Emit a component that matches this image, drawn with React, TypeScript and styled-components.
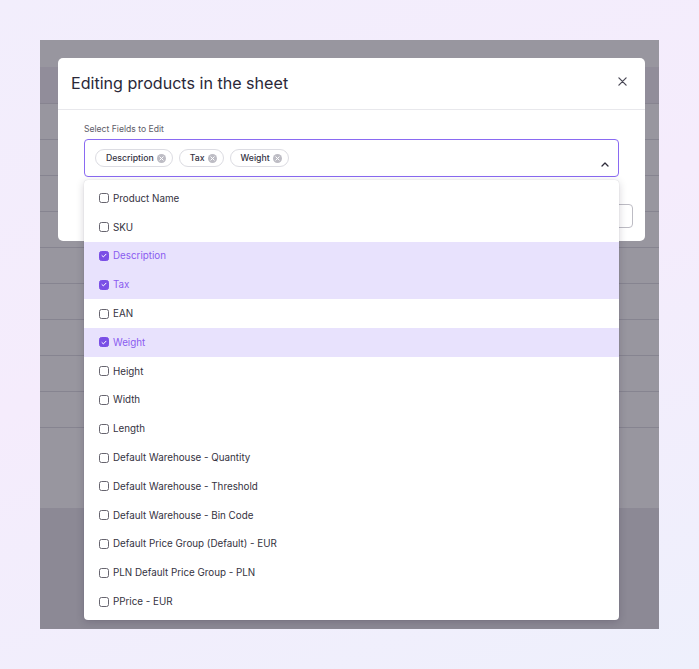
import React from "react";
import styled, { createGlobalStyle } from "styled-components";

const GlobalStyle = createGlobalStyle`
  html, body {
    margin: 0;
    padding: 0;
  }
  body {
    font-family: Inter, "Noto Sans", "Liberation Sans", sans-serif;
    background: linear-gradient(160deg, #f2eefc 0%, #f5ecfc 45%, #eef0fc 100%);
    min-height: 669px;
  }
  * {
    box-sizing: border-box;
  }
`;

const Page = styled.div`
  width: 699px;
  height: 669px;
  padding: 40px;
`;

const Frame = styled.div`
  position: relative;
  width: 619px;
  height: 589px;
  overflow: hidden;
  background: #eae9ee;
  display: flex;
  flex-direction: column;
`;

const AppTopBar = styled.div`
  height: 27px;
  background: #ffffff;
`;

const AppToolbar = styled.div`
  height: 37px;
  background: #f3f0f6;
  border-bottom: 1px solid #e2e1e6;
`;

const Table = styled.div`
  display: flex;
  flex-direction: column;
  background: #ffffff;
  padding-bottom: 80px;
`;

const TableRow = styled.div`
  height: 36px;
  border-bottom: 1px solid #e1e0e5;
`;

const Overlay = styled.div`
  position: absolute;
  inset: 0;
  background: rgba(6, 0, 22, 0.41);
`;

const Modal = styled.div`
  position: absolute;
  top: 18px;
  left: 18px;
  width: 587px;
  background: #ffffff;
  border-radius: 5px;
  display: flex;
  flex-direction: column;
`;

const ModalHeader = styled.div`
  height: 52px;
  padding: 0 18px 2px 13px;
  display: flex;
  align-items: center;
  justify-content: space-between;
  border-bottom: 1px solid #e8e8ec;
`;

const Title = styled.h2`
  margin: 0;
  font-size: 16.1px;
  font-weight: 400;
  color: #2a2838;
`;

const CloseButton = styled.button`
  border: none;
  background: none;
  padding: 0;
  width: 10px;
  height: 10px;
  display: flex;
  align-items: center;
  justify-content: center;
  margin-top: -2px;
  cursor: pointer;
`;

const ModalBody = styled.div`
  padding: 14px 26px 0 26px;
  display: flex;
  flex-direction: column;
  gap: 4px;
`;

const FieldLabel = styled.label`
  font-size: 8.6px;
  line-height: 11px;
  color: #5e5c68;
`;

const SelectWrap = styled.div`
  position: relative;
`;

const SelectBox = styled.div`
  height: 38px;
  border: 1.5px solid #8a6af2;
  border-radius: 4px;
  padding: 0 10px 0 10px;
  display: flex;
  align-items: center;
  gap: 6px;
  position: relative;
`;

const Chip = styled.span`
  height: 18px;
  padding: 0 6px 0 10px;
  border: 1px solid #dcdce2;
  border-radius: 9px;
  display: inline-flex;
  align-items: center;
  gap: 3px;
  font-size: 8.7px;
  font-weight: 500;
  color: #33313f;
`;

const ChipClear = styled.span`
  width: 9px;
  height: 9px;
  border-radius: 50%;
  background: #bdbcc4;
  display: inline-flex;
  align-items: center;
  justify-content: center;
`;

const Chevron = styled.span`
  position: absolute;
  right: 9px;
  bottom: 9px;
  display: flex;
`;

const Dropdown = styled.ul`
  position: absolute;
  top: 41px;
  left: 0;
  right: 0;
  margin: 0;
  padding: 4px 0;
  list-style: none;
  background: #ffffff;
  border-radius: 4px;
  box-shadow: 0 2px 8px rgba(20, 10, 40, 0.18), 0 0 1px rgba(20, 10, 40, 0.2);
  z-index: 2;
`;

const Option = styled.li<{ $selected: boolean }>`
  height: 28.8px;
  padding-left: 15px;
  display: flex;
  align-items: center;
  gap: 4px;
  font-size: 9.8px;
  color: ${({ $selected }) => ($selected ? "#8a5cf0" : "#34323e")};
  background: ${({ $selected }) => ($selected ? "#e8e2fd" : "#ffffff")};
`;

const Checkbox = styled.span<{ $checked: boolean }>`
  width: 10px;
  height: 10px;
  border-radius: 2.5px;
  border: ${({ $checked }) =>
    $checked ? "1.3px solid #7a4fe6" : "1.3px solid #67656f"};
  background: ${({ $checked }) => ($checked ? "#7a4fe6" : "#ffffff")};
  display: inline-flex;
  align-items: center;
  justify-content: center;
  flex-shrink: 0;
`;

const ModalFooter = styled.div`
  padding: 27px 12px 13px;
  display: flex;
  justify-content: flex-end;
  gap: 8px;
`;

const FooterButton = styled.button`
  height: 24px;
  padding: 0 14px;
  border: 1px solid #bdbcc4;
  border-radius: 4px;
  background: #ffffff;
  font-family: inherit;
  font-size: 10px;
  color: #34323e;
`;

const fields = [
  "Product Name",
  "SKU",
  "Description",
  "Tax",
  "EAN",
  "Weight",
  "Height",
  "Width",
  "Length",
  "Default Warehouse - Quantity",
  "Default Warehouse - Threshold",
  "Default Warehouse - Bin Code",
  "Default Price Group (Default) - EUR",
  "PLN Default Price Group - PLN",
  "PPrice - EUR",
];

const selected = ["Description", "Tax", "Weight"];

const CloseIcon = () => (
  <svg width="9" height="9" viewBox="0 0 10 10">
    <path d="M1 1 L9 9 M9 1 L1 9" stroke="#4a4856" strokeWidth="1.4" strokeLinecap="round" />
  </svg>
);

const ClearIcon = () => (
  <svg width="5" height="5" viewBox="0 0 6 6">
    <path d="M1 1 L5 5 M5 1 L1 5" stroke="#ffffff" strokeWidth="1.2" strokeLinecap="round" />
  </svg>
);

const ChevronUp = () => (
  <svg width="8" height="5" viewBox="0 0 8 5">
    <path d="M1 4 L4 1 L7 4" fill="none" stroke="#2e2c3a" strokeWidth="1.3" strokeLinecap="round" strokeLinejoin="round" />
  </svg>
);

const CheckMark = () => (
  <svg width="6" height="5" viewBox="0 0 6 5">
    <path d="M1 2.6 L2.4 3.9 L5 1.2" fill="none" stroke="#ffffff" strokeWidth="1" strokeLinecap="round" strokeLinejoin="round" />
  </svg>
);

export default function App() {
  return (
    <Page>
      <GlobalStyle />
      <Frame>
        <AppTopBar />
        <AppToolbar />
        <Table>
          {Array.from({ length: 9 }).map((_, i) => (
            <TableRow key={i} />
          ))}
        </Table>
        <Overlay />
        <Modal>
          <ModalHeader>
            <Title>Editing products in the sheet</Title>
            <CloseButton aria-label="Close">
              <CloseIcon />
            </CloseButton>
          </ModalHeader>
          <ModalBody>
            <FieldLabel>Select Fields to Edit</FieldLabel>
            <SelectWrap>
              <SelectBox>
                {selected.map((s) => (
                  <Chip key={s}>
                    {s}
                    <ChipClear>
                      <ClearIcon />
                    </ChipClear>
                  </Chip>
                ))}
                <Chevron>
                  <ChevronUp />
                </Chevron>
              </SelectBox>
              <Dropdown>
                {fields.map((f) => {
                  const on = selected.includes(f);
                  return (
                    <Option key={f} $selected={on}>
                      <Checkbox $checked={on}>{on && <CheckMark />}</Checkbox>
                      {f}
                    </Option>
                  );
                })}
              </Dropdown>
            </SelectWrap>
          </ModalBody>
          <ModalFooter>
            <FooterButton>Cancel</FooterButton>
            <FooterButton>Save</FooterButton>
          </ModalFooter>
        </Modal>
      </Frame>
    </Page>
  );
}
